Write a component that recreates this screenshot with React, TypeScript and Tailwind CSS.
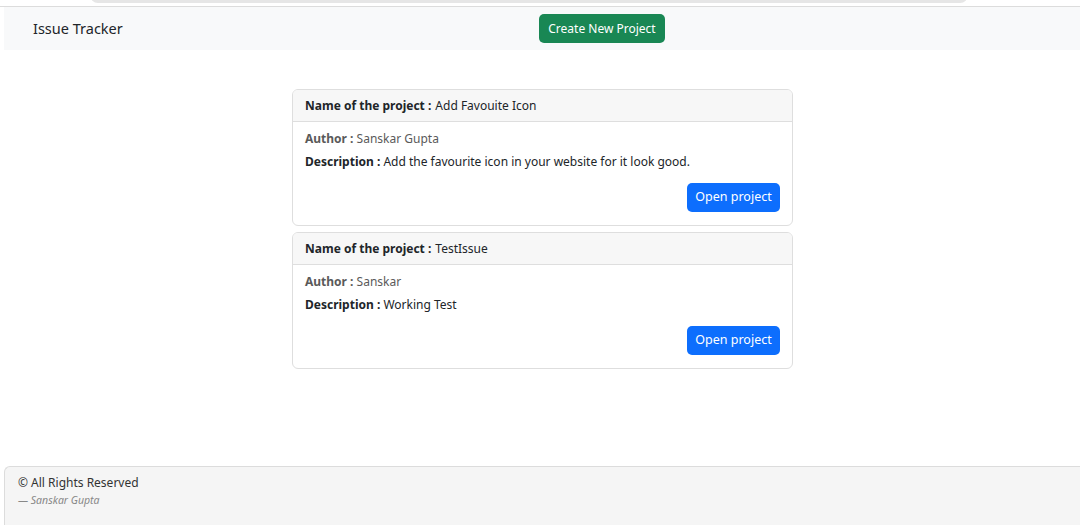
import React from "react";

const projects = [
  { name: "Add Favouite Icon", author: "Sanskar Gupta", desc: "Add the favourite icon in your website for it look good." },
  { name: "TestIssue", author: "Sanskar", desc: "Working Test" },
];

export default function App() {
  return (
    <div className="w-[1080px] h-[525px] bg-white flex flex-col text-[#212529] overflow-hidden" style={{ fontFamily: '"Noto Sans", "Open Sans", sans-serif' }}>
      <div className="h-[7px] relative border-b border-[#dcdcdc]">
        <div className="absolute left-[90px] w-[878px] top-[-6px] h-[9px] bg-[#e6e6e6] rounded-b-[8px]" />
      </div>
      <div className="ml-[4px] h-[43px] bg-[#f8f9fa] flex items-center relative">
        <span className="ml-[29px] text-[14.5px] leading-none">Issue Tracker</span>
        <button className="absolute left-[535px] top-[7px] h-[29px] w-[126px] bg-[#198754] text-white text-[12px] rounded-[5px] flex items-center justify-center">
          Create New Project
        </button>
      </div>
      <div className="flex-1 flex flex-col items-center pl-[5px] pt-[39px] gap-[6px]">
        {projects.map((p) => (
          <div key={p.name} className="w-[501px] h-[137px] border border-[#dedede] rounded-[6px] flex flex-col overflow-hidden">
            <div className="h-[32px] bg-[#f7f7f7] border-b border-[#dedede] flex items-center px-[12px] text-[12px]">
              <span className="font-bold">Name of the project :</span>
              <span className="ml-[4px]">{p.name}</span>
            </div>
            <div className="flex-1 px-[12px] pt-[9px] text-[12px] flex flex-col">
              <div className="text-[#5a5a5a] h-[16px] leading-[16px]">
                <span className="font-bold">Author :</span> {p.author}
              </div>
              <div className="mt-[7px] h-[16px] leading-[16px]">
                <span className="font-bold">Description :</span> {p.desc}
              </div>
              <div className="flex justify-end mt-[13px]">
                <button className="h-[29px] w-[93px] bg-[#0d6efd] text-white text-[12.5px] rounded-[5px]">Open project</button>
              </div>
            </div>
          </div>
        ))}
      </div>
      <div className="ml-[4px] h-[59px] bg-[#f5f5f5] border-t border-l border-[#dcdcdc] rounded-tl-[6px] px-[13px] pt-[8px]">
        <div className="text-[12px] leading-[16px] text-[#333]">© All Rights Reserved</div>
        <div className="text-[10.5px] leading-[14px] mt-[2px] italic text-[#888]">— Sanskar Gupta</div>
      </div>
    </div>
  );
}
